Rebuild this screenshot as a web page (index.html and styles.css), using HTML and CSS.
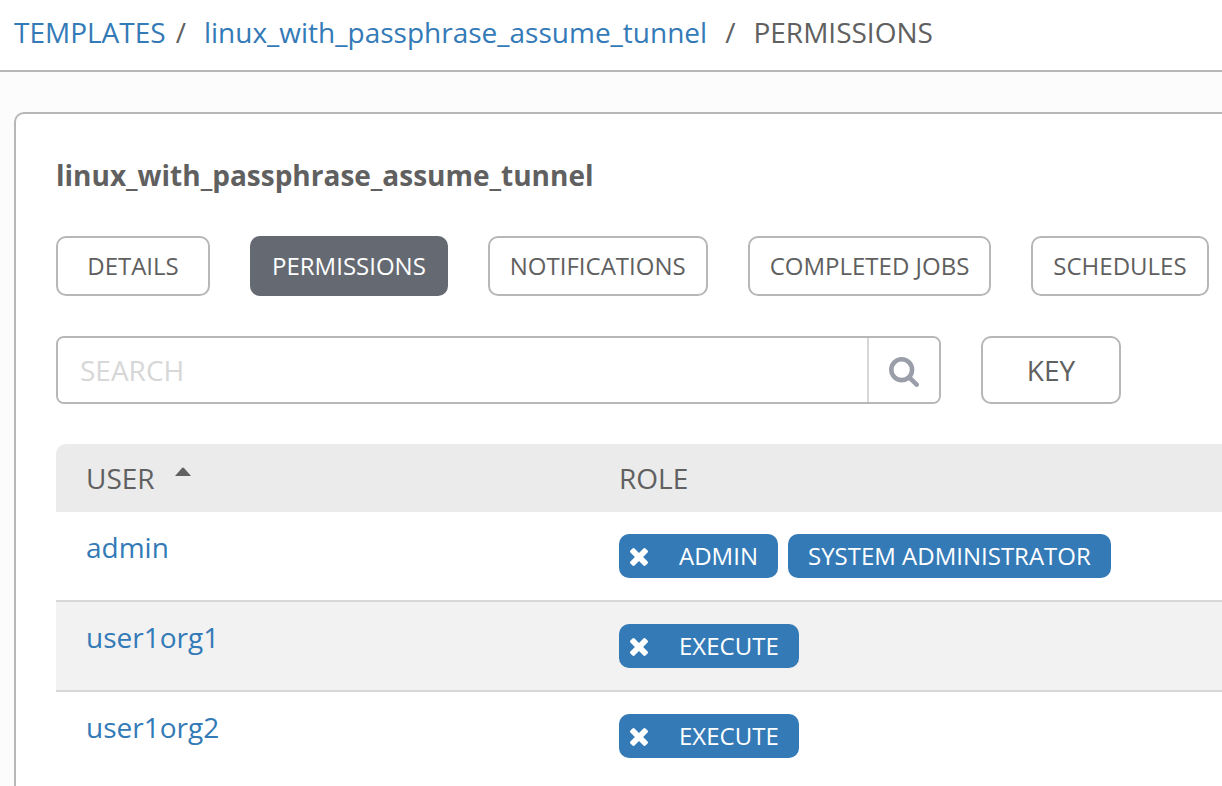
FILE: index.html
```html
<!DOCTYPE html>
<html lang="en">
<head>
<meta charset="utf-8">
<title>Template permissions</title>
<link rel="stylesheet" href="styles.css">
</head>
<body>
<svg class="sprite" aria-hidden="true">
  <symbol id="times" viewBox="302 366 1188 1188"><path d="M1490 1322q0 40-28 68l-136 136q-28 28-68 28t-68-28l-294-294-294 294q-28 28-68 28t-68-28l-136-136q-28-28-28-68t28-68l294-294-294-294q-28-28-28-68t28-68l136-136q28-28 68-28t68 28l294 294 294-294q28-28 68-28t68 28l136 136q28 28 28 68t-28 68l-294 294 294 294q28 28 28 68z"/></symbol>
</svg>
<nav class="breadcrumb" aria-label="Breadcrumb">
  <a href="#">TEMPLATES</a>
  <span class="slash slash-first">/</span>
  <a href="#">linux_with_passphrase_assume_tunnel</a>
  <span class="slash">/</span>
  <span>PERMISSIONS</span>
</nav>
<main class="panel">
  <h1 class="title">linux_with_passphrase_assume_tunnel</h1>
  <div class="tabs">
    <button class="btn tab" type="button">DETAILS</button>
    <button class="btn tab active" type="button">PERMISSIONS</button>
    <button class="btn tab" type="button">NOTIFICATIONS</button>
    <button class="btn tab" type="button">COMPLETED JOBS</button>
    <button class="btn tab" type="button">SCHEDULES</button>
  </div>
  <div class="toolbar">
    <form class="search">
      <input class="search-input" type="text" placeholder="SEARCH" aria-label="Search">
      <button class="search-btn" type="button" aria-label="Run search">
        <svg class="search-icon" viewBox="64 128 1664 1664"><path d="M1216 832q0-185-131.5-316.5t-316.5-131.5-316.5 131.5-131.5 316.5 131.5 316.5 316.5 131.5 316.5-131.5 131.5-316.5zm512 832q0 52-38 90t-90 38q-54 0-90-38l-343-342q-179 124-399 124-143 0-273.5-55.5t-225-150-150-225-55.5-273.5 55.5-273.5 150-225 225-150 273.5-55.5 273.5 55.5 225 150 150 225 55.5 273.5q0 220-124 399l343 343q37 37 37 90z"/></svg>
      </button>
    </form>
    <button class="btn key" type="button">KEY</button>
  </div>
  <table class="list">
    <thead>
      <tr><th class="user-col">USER<svg class="caret" viewBox="0 0 16 9"><path d="M0 9 7 1Q8 0 9 1L16 9Z"/></svg></th><th class="role-col">ROLE</th></tr>
    </thead>
    <tbody>
      <tr>
        <td class="user-col"><a href="#">admin</a></td>
        <td class="role-col"><div class="tags">
          <span class="tag"><button class="remove" type="button" aria-label="Remove admin"><svg class="times"><use href="#times"/></svg></button><span class="tag-name">ADMIN</span></span>
          <span class="tag"><span class="tag-name">SYSTEM ADMINISTRATOR</span></span>
        </div></td>
      </tr>
      <tr>
        <td class="user-col"><a href="#">user1org1</a></td>
        <td class="role-col"><div class="tags">
          <span class="tag"><button class="remove" type="button" aria-label="Remove execute"><svg class="times"><use href="#times"/></svg></button><span class="tag-name">EXECUTE</span></span>
        </div></td>
      </tr>
      <tr>
        <td class="user-col"><a href="#">user1org2</a></td>
        <td class="role-col"><div class="tags">
          <span class="tag"><button class="remove" type="button" aria-label="Remove execute"><svg class="times"><use href="#times"/></svg></button><span class="tag-name">EXECUTE</span></span>
        </div></td>
      </tr>
    </tbody>
  </table>
</main>
</body>
</html>
```
FILE: styles.css
```css
* { box-sizing: border-box; }
html, body { height: 100%; }
body {
  margin: 0;
  display: flex;
  flex-direction: column;
  background: #fcfcfc;
  color: #606060;
  font: 28px/38px "Open Sans", sans-serif;
}
a { color: #337ab7; text-decoration: none; }
button, input { font: inherit; color: inherit; }
.sprite { display: none; }

.breadcrumb {
  display: flex;
  align-items: center;
  padding: 13px 14px 19px;
  background: #fff;
  border-bottom: 2px solid #b7b7b7;
  font-weight: 500;
  white-space: nowrap;
}
.slash { margin: 0 18px; }
.slash-first { margin-left: 10px; }

.panel {
  flex: 1 0 auto;
  margin: 40px 0 0 14px;
  padding: 42px 0 0 40px;
  background: #fff;
  border: 2px solid #b7b7b7;
  border-width: 2px 0 0 2px;
  border-top-left-radius: 10px;
}
.title { margin: 0; font-size: 28px; font-weight: 700; }

.btn {
  padding: 0 20px;
  background: #fff;
  border: 2px solid #b7b7b7;
  border-radius: 10px;
  white-space: nowrap;
}
.tabs { display: flex; gap: 40px; margin-top: 42px; }
.tab { height: 60px; min-width: 154px; font-size: 24px; }
.active { background: #646972; border-color: #646972; color: #fff; }

.toolbar { display: flex; gap: 40px; margin: 40px 0; }
.search {
  display: flex;
  flex: 0 1 885px;
  height: 68px;
  border: 2px solid #b7b7b7;
  border-radius: 8px;
  overflow: hidden;
}
.search-input {
  flex: 1;
  min-width: 0;
  padding: 0 22px;
  border: 0;
  background: #fff;
}
.search-input::placeholder { color: #d7d7d7; opacity: 1; }
.search-btn {
  display: flex;
  align-items: center;
  justify-content: center;
  width: 72px;
  padding: 3px 0 0;
  border: 0;
  border-left: 2px solid #d7d7d7;
  background: #fff;
}
.search-icon { width: 30px; height: 30px; fill: #9a9ea8; }
.key { width: 140px; }

.list { width: 100%; border-spacing: 0; }
th {
  height: 68px;
  padding: 0;
  background: #ebebeb;
  font-weight: 400;
  text-align: left;
}
th:first-child { border-top-left-radius: 10px; }
.caret {
  width: 16px;
  height: 9px;
  margin: 0 0 7px 20px;
  vertical-align: 6px;
  fill: #606060;
}
td { padding: 16px 0; vertical-align: top; border-bottom: 2px solid #d7d7d7; }
tr:last-child td { border-bottom: 0; }
tbody tr:nth-child(even) { background: #f2f2f2; }
.user-col { width: 47%; padding-left: 30px; }
.role-col { padding-left: 15px; }
td.role-col { padding-top: 22px; padding-bottom: 22px; }
.tags { display: flex; gap: 10px; }
.tag {
  display: flex;
  height: 44px;
  border-radius: 10px;
  background: #337ab7;
  color: #fff;
  font-size: 24px;
  font-weight: 500;
  line-height: 44px;
  white-space: nowrap;
}
.tag-name { padding: 0 20px; }
.remove {
  display: flex;
  align-items: center;
  justify-content: center;
  width: 40px;
  padding: 2px 0 0;
  border: 0;
  background: none;
}
.times { width: 18px; height: 18px; fill: #fff; }
```
